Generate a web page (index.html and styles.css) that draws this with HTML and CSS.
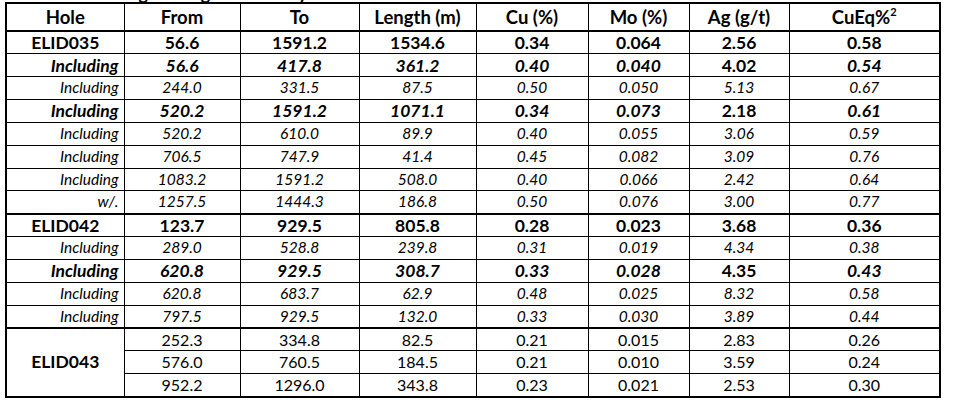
FILE: index.html
```html
<!DOCTYPE html>
<html lang="en">
<head>
<meta charset="utf-8">
<title>Drill results</title>
<link rel="stylesheet" href="styles.css">
</head>
<body>
<div class="page">
  <div class="title-clip"><div class="title">Long Drilling Intervals by Hole</div></div>
  <table class="assay">
    <colgroup>
      <col class="w-hole"><col class="w-from"><col class="w-to"><col class="w-len">
      <col class="w-cu"><col class="w-mo"><col class="w-ag"><col class="w-eq">
    </colgroup>
    <thead>
      <tr class="head">
        <th>Hole</th><th>From</th><th>To</th><th>Length (m)</th><th>Cu (%)</th><th>Mo (%)</th><th>Ag (g/t)</th><th>CuEq%<sup>2</sup></th>
      </tr>
    </thead>
    <tbody>
      <tr class="main"><td>ELID035</td><td>56.6</td><td>1591.2</td><td>1534.6</td><td>0.34</td><td>0.064</td><td>2.56</td><td>0.58</td></tr>
      <tr class="sub"><td class="lbl">Including</td><td>56.6</td><td>417.8</td><td>361.2</td><td>0.40</td><td>0.040</td><td class="up">4.02</td><td>0.54</td></tr>
      <tr class="minor"><td class="lbl">Including</td><td>244.0</td><td>331.5</td><td>87.5</td><td>0.50</td><td>0.050</td><td>5.13</td><td>0.67</td></tr>
      <tr class="sub"><td class="lbl">Including</td><td>520.2</td><td>1591.2</td><td>1071.1</td><td>0.34</td><td>0.073</td><td class="up">2.18</td><td>0.61</td></tr>
      <tr class="minor"><td class="lbl">Including</td><td>520.2</td><td>610.0</td><td>89.9</td><td>0.40</td><td>0.055</td><td>3.06</td><td>0.59</td></tr>
      <tr class="minor"><td class="lbl">Including</td><td>706.5</td><td>747.9</td><td>41.4</td><td>0.45</td><td>0.082</td><td>3.09</td><td>0.76</td></tr>
      <tr class="minor"><td class="lbl">Including</td><td>1083.2</td><td>1591.2</td><td>508.0</td><td>0.40</td><td>0.066</td><td>2.42</td><td>0.64</td></tr>
      <tr class="minor"><td class="lbl">w/.</td><td>1257.5</td><td>1444.3</td><td>186.8</td><td>0.50</td><td>0.076</td><td>3.00</td><td>0.77</td></tr>
      <tr class="main sep"><td>ELID042</td><td>123.7</td><td>929.5</td><td>805.8</td><td>0.28</td><td>0.023</td><td>3.68</td><td>0.36</td></tr>
      <tr class="minor"><td class="lbl">Including</td><td>289.0</td><td>528.8</td><td>239.8</td><td>0.31</td><td>0.019</td><td>4.34</td><td>0.38</td></tr>
      <tr class="sub"><td class="lbl">Including</td><td>620.8</td><td>929.5</td><td>308.7</td><td>0.33</td><td>0.028</td><td class="up">4.35</td><td>0.43</td></tr>
      <tr class="minor"><td class="lbl">Including</td><td>620.8</td><td>683.7</td><td>62.9</td><td>0.48</td><td>0.025</td><td>8.32</td><td>0.58</td></tr>
      <tr class="minor"><td class="lbl">Including</td><td>797.5</td><td>929.5</td><td>132.0</td><td>0.33</td><td>0.030</td><td>3.89</td><td>0.44</td></tr>
      <tr class="plain sep"><td class="hole-span" rowspan="3">ELID043</td><td>252.3</td><td>334.8</td><td>82.5</td><td>0.21</td><td>0.015</td><td>2.83</td><td>0.26</td></tr>
      <tr class="plain"><td>576.0</td><td>760.5</td><td>184.5</td><td>0.21</td><td>0.010</td><td>3.59</td><td>0.24</td></tr>
      <tr class="plain"><td>952.2</td><td>1296.0</td><td>343.8</td><td>0.23</td><td>0.021</td><td>2.53</td><td>0.30</td></tr>
    </tbody>
  </table>
</div>
</body>
</html>
```

FILE: styles.css
```css
html, body {
  margin: 0;
  padding: 0;
  background: #ffffff;
}

body {
  font-family: "Lato", "Carlito", "Open Sans", sans-serif;
  color: #000000;
}

.page {
  padding: 0 0 0 5px;
}

.title-clip {
  height: 2px;
  overflow: hidden;
}

.title {
  font-weight: 700;
  font-size: 18px;
  line-height: 20px;
  margin-top: -17px;
  padding-left: 104px;
  white-space: nowrap;
}

.assay {
  border-collapse: collapse;
  table-layout: fixed;
  width: 934px;
  border: 2px solid #000000;
}

.w-hole { width: 118px; }
.w-from { width: 116px; }
.w-to   { width: 119px; }
.w-len  { width: 117px; }
.w-cu   { width: 112px; }
.w-mo   { width: 101px; }
.w-ag   { width: 100px; }
.w-eq   { width: 151px; }

.assay th,
.assay td {
  border: 1px solid #000000;
  padding: 0 5px;
  text-align: center;
  vertical-align: middle;
  line-height: 1;
  white-space: nowrap;
}

.head {
  height: 28px;
}

.head th {
  font-weight: 700;
  font-size: 18.5px;
  border-bottom: 2px solid #000000;
}

.head sup {
  font-size: 11px;
  line-height: 0;
  vertical-align: 8px;
}

.assay tbody tr {
  height: 22.85px;
}

.main td {
  font-weight: 700;
  font-size: 17.5px;
}

.sub td {
  font-weight: 700;
  font-style: italic;
  font-size: 17.5px;
}

.sub td.up {
  font-style: normal;
}

.minor td {
  font-weight: 400;
  font-style: italic;
  font-size: 15.5px;
}

.plain td {
  font-weight: 400;
  font-size: 16px;
}

.assay td.lbl {
  text-align: right;
  padding-right: 5px;
}

.assay td.hole-span {
  font-weight: 700;
  font-size: 17.5px;
}

.sep td {
  border-top: 2px solid #000000;
}
```
